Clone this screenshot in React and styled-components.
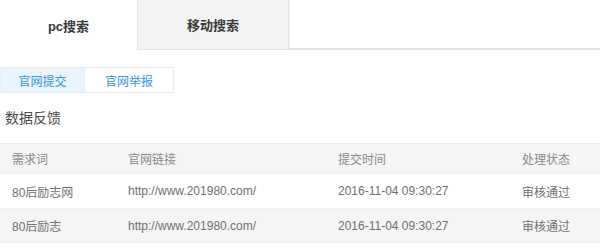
import React from "react";
import styled, { createGlobalStyle } from "styled-components";

const GlobalStyle = createGlobalStyle`
  * { box-sizing: border-box; }
  body {
    margin: 0;
    background: #fff;
    font-family: "Liberation Sans", "Noto Sans CJK SC", sans-serif;
  }
`;

const rows = [
  { word: "80后励志网", url: "http://www.201980.com/", time: "2016-11-04 09:30:27", status: "审核通过" },
  { word: "80后励志", url: "http://www.201980.com/", time: "2016-11-04 09:30:27", status: "审核通过" },
];

const App = () => {
  return (
    <>
      <GlobalStyle />
      <Page>
        <TabBar>
          <Tab active>pc搜索</Tab>
          <Tab>移动搜索</Tab>
          <TabFill />
        </TabBar>

        <SubTabs>
          <SubTab active width={85}>官网提交</SubTab>
          <SubTab width={89}>官网举报</SubTab>
        </SubTabs>

        <Title>数据反馈</Title>

        <Table>
          <Row head>
            <Cell>需求词</Cell>
            <Cell>官网链接</Cell>
            <Cell>提交时间</Cell>
            <Cell>处理状态</Cell>
          </Row>
          {rows.map((item, i) => (
            <Row key={i} striped={i % 2 === 1}>
              <Cell>{item.word}</Cell>
              <Cell>{item.url}</Cell>
              <Cell>{item.time}</Cell>
              <Cell>{item.status}</Cell>
            </Row>
          ))}
        </Table>
      </Page>
    </>
  );
};

const Page = styled.div`
  width: 600px;
  height: 247px;
  overflow: hidden;
`;
const TabBar = styled.div`
  display: flex;
  height: 50px;
`;
const Tab = styled.div`
  display: flex;
  align-items: center;
  justify-content: center;
  width: ${(p) => (p.active ? "137px" : "152px")};
  font-size: 13px;
  font-weight: bold;
  color: #3a3a3a;
  background: ${(p) => (p.active ? "#fff" : "#f3f3f3")};
  border: ${(p) => (p.active ? "none" : "1px solid #e6e6e6")};
  border-top: none;
`;
const TabFill = styled.div`
  flex: 1;
  border-left: 1px solid #f0f0f0;
  border-bottom: 2px solid #e2e2e2;
`;
const SubTabs = styled.div`
  display: flex;
  margin-top: 17px;
  height: 26px;
`;
const SubTab = styled.div`
  width: ${(p) => p.width}px;
  display: flex;
  align-items: center;
  justify-content: center;
  font-size: 12px;
  color: #3d95da;
  background: ${(p) => (p.active ? "#e9f4fd" : "#fff")};
  border: 1px solid #ececec;
  border-left: ${(p) => (p.active ? "1px solid #ececec" : "none")};
`;
const Title = styled.div`
  padding: 14px 0 0 5px;
  height: 50px;
  font-size: 14px;
  color: #4a4a4a;
`;
const Table = styled.div`
  display: flex;
  flex-direction: column;
`;
const Row = styled.div`
  display: grid;
  grid-template-columns: 116px 210px 184px 1fr;
  align-items: center;
  padding-left: 12px;
  height: ${(p) => (p.head ? "30px" : "35px")};
  background: ${(p) => (p.head || p.striped ? "#f5f5f5" : "#fff")};
  border-top: 1px solid ${(p) => (p.head ? "#eeeeee" : "#f0f0f0")};
  font-size: 12px;
  color: ${(p) => (p.head ? "#8a8a8a" : "#707070")};
  &:last-child {
    border-bottom: 1px solid #ececec;
  }
`;
const Cell = styled.div`
  white-space: nowrap;
`;

export default App;
